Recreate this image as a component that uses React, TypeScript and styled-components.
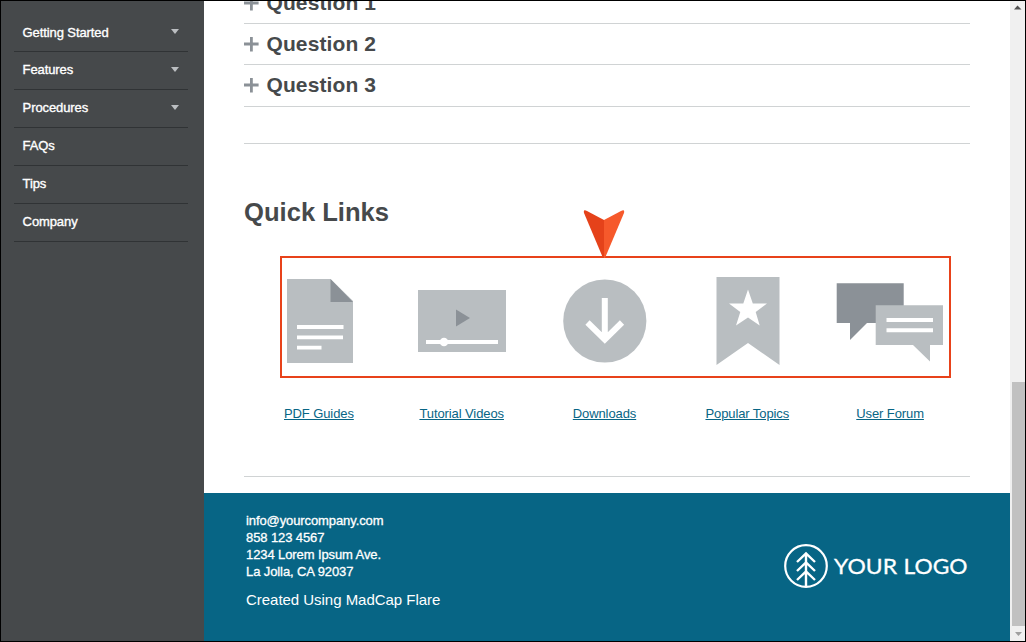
import React from 'react';
import styled, { createGlobalStyle } from 'styled-components';

const GlobalStyle = createGlobalStyle`
  * { box-sizing: border-box; }
  body { margin: 0; background: #fff; font-family: "Liberation Sans", Arial, sans-serif; }
`;

const Frame = styled.div`
  position: relative;
  display: flex;
  width: 1026px;
  height: 642px;
  border: 1px solid #000;
  overflow: hidden;
`;

const Sidebar = styled.nav`
  flex: 0 0 203px;
  background: #46494b;
  padding: 13px 16px 0 13px;
`;

const NavItem = styled.div<{ $first?: boolean }>`
  display: flex;
  align-items: center;
  justify-content: space-between;
  height: 38px;
  padding: ${p => (p.$first ? '1px' : '0')} 9px ${p => (p.$first ? '0' : '1px')} 8.6px;
  border-bottom: 1px solid #303335;
  color: #fff;
  font-size: 13px;
  line-height: 16px;
  letter-spacing: -0.1px;
  -webkit-text-stroke: 0.35px #fff;
`;

const Caret = styled.span<{ $first?: boolean }>`
  border: solid transparent;
  border-width: 5px 4.5px 0;
  border-top-color: #bbbec1;
  margin-top: ${p => (p.$first ? '-3px' : '-1px')};
`;

const Page = styled.div`
  flex: 1;
  display: flex;
  flex-direction: column;
`;

const Main = styled.main`
  height: 492px;
  padding: 0 40px;
  overflow: hidden;
`;

const Question = styled.div<{ $h: number }>`
  display: flex;
  align-items: flex-end;
  gap: 7.5px;
  height: ${p => p.$h}px;
  padding-bottom: ${p => (p.$h === 42 ? 10 : 9)}px;
  border-bottom: 1px solid #d0d3d4;
  color: #46494b;
  font-size: 21px;
  font-weight: bold;
  line-height: 22px;
  letter-spacing: 0.1px;
  white-space: nowrap;
  svg { margin-bottom: 3px; }
`;

const Rule = styled.div<{ $h: number }>`
  height: ${p => p.$h}px;
  border-bottom: 1px solid #d0d3d4;
`;

const Section = styled.section`
  height: 333px;
  padding-top: 53px;
  border-bottom: 1px solid #d0d3d4;
`;

const Title = styled.h2`
  margin: 0;
  color: #46494b;
  font-size: 25.6px;
  line-height: 30px;
`;

const Links = styled.div`
  display: grid;
  grid-template-columns: repeat(5, 1fr);
  width: 714px;
  margin: 41px 0 0 3px;
`;

const LinkCard = styled.div`
  display: flex;
  flex-direction: column;
  align-items: center;
  svg { display: block; margin-left: 2px; }
`;

const TextLink = styled.a`
  margin: 34px 0 0 1px;
  color: #076585;
  font-size: 13px;
  line-height: 16px;
  letter-spacing: -0.1px;
  text-decoration: underline;
`;

const Footer = styled.footer`
  flex: 1;
  display: flex;
  justify-content: space-between;
  align-items: flex-start;
  padding: 19px 42px 0;
  background: #076585;
  color: #fff;
`;

const Contact = styled.div`
  font-size: 13px;
  line-height: 17px;
  letter-spacing: -0.1px;
  -webkit-text-stroke: 0.3px #fff;
`;

const Credit = styled.div`
  margin-top: 11px;
  font-size: 15px;
  letter-spacing: -0.03px;
  -webkit-text-stroke: 0;
`;

const Logo = styled.svg`
  margin-top: 31px;
`;

const Scrollbar = styled.div`
  flex: 0 0 15px;
  display: flex;
  flex-direction: column;
  align-items: flex-end;
  justify-content: space-between;
  background: #f0f0f0;
`;

const Thumb = styled.div`
  width: 13px;
  height: 244px;
  margin-top: auto;
  background: #c1c1c1;
`;

const ScrollArrow = styled.div`
  width: 15px;
  height: 15px;
  svg { display: block; }
`;

const Callout = styled.div`
  position: absolute;
  left: 279px;
  top: 255px;
  width: 671px;
  height: 122px;
  border: 2px solid #e8421a;
`;

const Pointer = styled.svg`
  position: absolute;
  left: 301px;
  top: -49px;
`;

const light = '#b9bec1';
const dark = '#8b9197';

const Plus = () => (
  <svg width="15" height="15" viewBox="0 0 15 15">
    <path d="M0 7H14.6M7.4 0V14.4" stroke="#8b9197" strokeWidth="2.8" />
  </svg>
);

/* Each drawing occupies a 114x104 box centred in its column. */
const drawings: Record<string, React.ReactNode> = {
  'PDF Guides': (
    <>
      <path d="M25 11H68.5L91 33V95H25Z" fill={light} />
      <path d="M68.5 11L91 34H68.5Z" fill={dark} />
      <path d="M35 59H81.5M35 69.3H81M35 79.6H59.5" stroke="#fff" strokeWidth="3.8" />
    </>
  ),
  'Tutorial Videos': (
    <>
      <path d="M13 22H101V84H13Z" fill={light} />
      <path d="M51 41.5L65 50L51 58.5Z" fill={dark} />
      <path d="M21 74H93" stroke="#fff" strokeWidth="4" />
      <circle cx="39" cy="74" r="4.3" fill="#fff" />
    </>
  ),
  Downloads: (
    <>
      <circle cx="56.8" cy="53" r="41.6" fill={light} />
      <path d="M56.8 30V72M39.5 54.5L56.8 71.5L74 54.5" fill="none" stroke="#fff" strokeWidth="6" />
    </>
  ),
  'Popular Topics': (
    <>
      <path d="M25.5 9H88.5V97L57 75L25.5 97Z" fill={light} />
      <path d="M57 21.5L61.8 35.5H76L64.7 44L68.7 57.5L57 49.5L45 57.5L49.3 44L38 35.5H52.3Z" fill="#fff" />
    </>
  ),
  'User Forum': (
    <>
      <path d="M2.7 15.3H69.7V55H33L16 72V55H2.7Z" fill={dark} />
      <path d="M41.7 37.3H109V77H96V93.5L79 77H41.7Z" fill={light} />
      <path d="M52.5 52H99M52.5 62.2H99" stroke="#fff" strokeWidth="4" />
    </>
  ),
};

const navItems = ['Getting Started', 'Features', 'Procedures', 'FAQs', 'Tips', 'Company'];

export default function App() {
  return (
    <>
      <GlobalStyle />
      <Frame>
        <Sidebar>
          {navItems.map((label, i) => (
            <NavItem key={label} $first={i === 0}>
              {label}
              {i < 3 && <Caret $first={i === 0} />}
            </NavItem>
          ))}
        </Sidebar>
        <Page>
          <Main>
            <Question $h={23}><Plus />Question 1</Question>
            <Question $h={41}><Plus />Question 2</Question>
            <Question $h={42}><Plus />Question 3</Question>
            <Rule $h={37} />
            <Section>
              <Title>Quick Links</Title>
              <Links>
                {Object.entries(drawings).map(([label, art]) => (
                  <LinkCard key={label}>
                    <svg width="114" height="104" viewBox="0 0 114 104">{art}</svg>
                    <TextLink>{label}</TextLink>
                  </LinkCard>
                ))}
              </Links>
            </Section>
          </Main>
          <Footer>
            <Contact>
              <div>info@yourcompany.com</div>
              <div>858 123 4567</div>
              <div>1234 Lorem Ipsum Ave.</div>
              <div>La Jolla, CA 92037</div>
              <Credit>Created Using MadCap Flare</Credit>
            </Contact>
            <Logo width="185" height="46" viewBox="0 0 185 46">
              <g fill="none" stroke="#fff" strokeWidth="2.2">
                <circle cx="23" cy="23" r="20.8" />
                <path d="M23 10V44M14 19L23 10.5L32 19M14 28L23 19.5L32 28M14 37L23 28.5L32 37" strokeWidth="2.4" />
              </g>
              <g fill="#fff" stroke="#fff" strokeWidth="0.3" fontFamily="Lato, sans-serif" fontSize="22">
                <text x="51" y="31" textLength="63" lengthAdjust="spacingAndGlyphs">YOUR</text>
                <text x="120.5" y="31" textLength="64" lengthAdjust="spacingAndGlyphs">LOGO</text>
              </g>
            </Logo>
          </Footer>
        </Page>
        <Scrollbar>
          <ScrollArrow>
            <svg width="15" height="15"><path d="M4 8.5L7.5 4.5L11.5 8.5Z" fill="#505050" /></svg>
          </ScrollArrow>
          <Thumb />
          <ScrollArrow>
            <svg width="15" height="15"><path d="M5 6H12L8.5 10Z" fill="#a0a0a0" /></svg>
          </ScrollArrow>
        </Scrollbar>
        <Callout>
          <Pointer width="42" height="50" viewBox="0 0 42 50">
            <path d="M1 4Q0 0 4 2L21 11V49H20Z" fill="#e5421a" />
            <path d="M41 4Q42 0 38 2L21 11V49H22Z" fill="#f6592b" />
          </Pointer>
        </Callout>
      </Frame>
    </>
  );
}
